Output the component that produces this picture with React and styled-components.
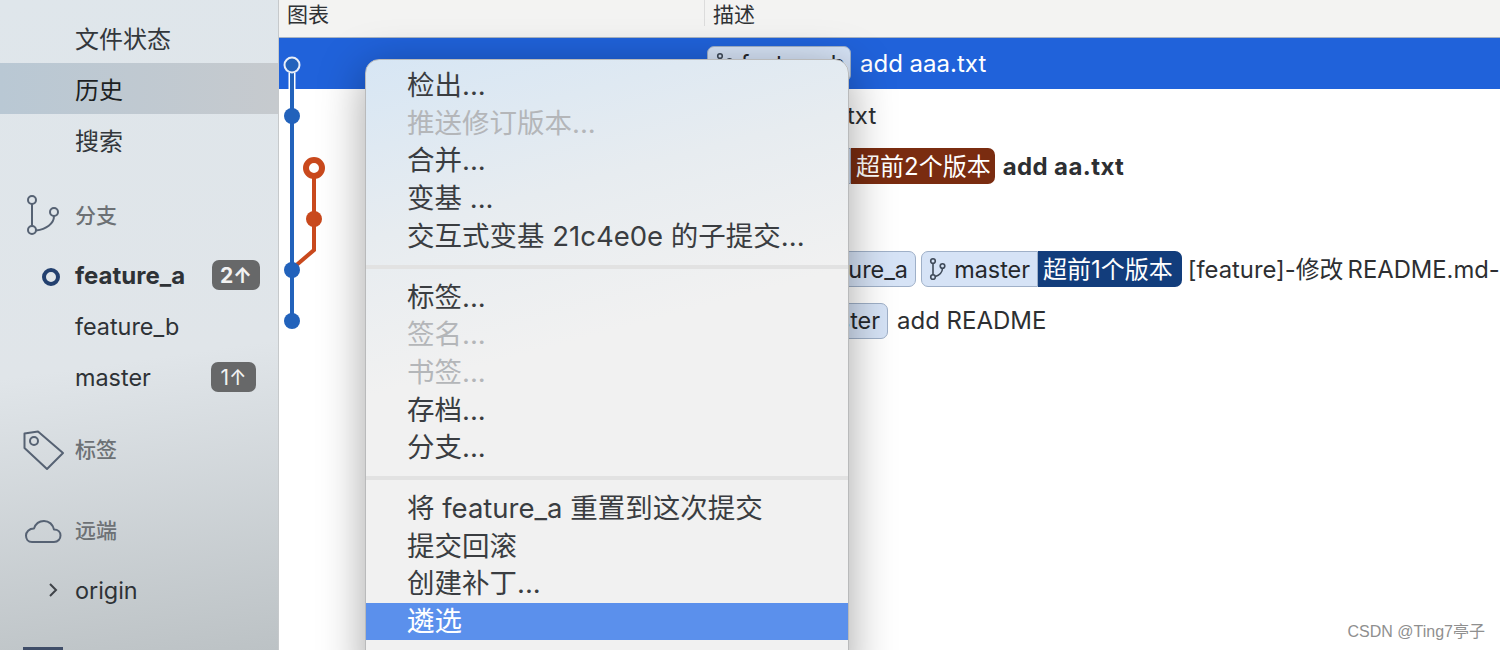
import styled, { createGlobalStyle } from 'styled-components'

const FONT = `"Inter", "Noto Sans CJK SC", sans-serif`

const GlobalStyle = createGlobalStyle`
    html, body {
        margin: 0;
        height: 650px;
        overflow: hidden;
        background: #fff;
        font-family: ${FONT};
    }
`

const Window = styled.div`
    display: flex;
    width: 1500px;
    height: 650px;
    overflow: hidden;
    position: relative;
`

/* sidebar */
const Sidebar = styled.aside`
    width: 279px;
    flex-shrink: 0;
    height: 650px;
    padding-top: 12px;
    box-sizing: border-box;
    overflow: hidden;
    border-right: 1px solid #c6c9cb;
    background: linear-gradient(172deg, #dfe6eb 0%, #e0e5e9 55%, #bcc2c5 100%);
`
const NavItem = styled.div`
    height: 51px;
    display: flex;
    align-items: center;
    padding-left: 75px;
    font-size: 24px;
    background: ${props => props.$active ? 'linear-gradient(90deg, #b9c8d4, #c6cace)' : 'transparent'};
    color: ${props => props.$active ? '#1c1f22' : '#33373b'};
`
const Section = styled.div`
    height: 50px;
    margin-top: ${props => props.$top}px;
    box-sizing: border-box;
    padding: 0 0 4px 75px;
    display: flex;
    align-items: center;
    position: relative;
    font-size: 21px;
    font-weight: 500;
    color: #6d7175;
`
const SectionIcon = styled.svg`
    position: absolute;
    left: 0;
    top: 0;
    width: 75px;
    height: 50px;
    fill: none;
    stroke: #566273;
    stroke-width: 2;
`
const BranchRow = styled.div`
    height: 51px;
    display: flex;
    align-items: center;
    padding-left: 75px;
    margin-top: ${props => props.$top || 0}px;
    position: relative;
    font-size: ${props => props.$bold ? 24 : 23.4}px;
    font-weight: ${props => props.$bold ? 700 : 400};
    color: #2e3236;
`
const CurrentDot = styled.span`
    position: absolute;
    left: 42px;
    top: 18px;
    width: 10px;
    height: 10px;
    border: 4px solid #23406f;
    border-radius: 50%;
`
const Badge = styled.span`
    position: absolute;
    left: ${props => props.$left}px;
    top: 10px;
    width: ${props => props.$width}px;
    height: 30px;
    border-radius: 7px;
    background: #676869;
    color: #f2f2f2;
    font-size: 21px;
    display: flex;
    align-items: center;
    justify-content: center;
`
const Chevron = styled.svg`
    position: absolute;
    left: 47px;
    top: 16px;
    width: 12px;
    height: 18px;
    fill: none;
    stroke: #3f4348;
    stroke-width: 2;
`
const BottomIcon = styled.div`
    width: 40px;
    height: 6px;
    margin: 31px 0 0 23px;
    background: #3f4d68;
`

/* commit list */
const Main = styled.main`
    flex: 1;
    position: relative;
    min-width: 0;
`
const Header = styled.div`
    height: 38px;
    box-sizing: border-box;
    display: flex;
    background: #f3f3f2;
    border-bottom: 1px solid #a9b4c2;
    font-size: 21px;
    color: #2f3235;
`
const HeaderCell = styled.div`
    width: ${props => props.$width || 'auto'};
    padding-left: 8px;
    box-sizing: border-box;
    height: 26px;
    display: flex;
    align-items: center;
    border-right: ${props => props.$divider ? '1px solid #dcdcdc' : 'none'};
`
const Row = styled.div`
    height: 51.4px;
    display: flex;
    align-items: center;
    box-sizing: border-box;
    padding-left: 428px;
    white-space: nowrap;
    font-size: 24px;
    color: #2d2f32;
    background: ${props => props.$selected ? '#2062da' : '#fff'};
`
const Tag = styled.span`
    height: 36px;
    width: ${props => props.$width}px;
    box-sizing: border-box;
    flex-shrink: 0;
    display: flex;
    align-items: center;
    justify-content: flex-end;
    gap: 8px;
    padding: 0 ${props => props.$right ?? 7}px 0 7px;
    margin-right: ${props => props.$gap ?? 8}px;
    border: 1px solid #9fb0c8;
    border-radius: ${props => props.$joined ? '7px 0 0 7px' : '7px'};
    background: #d6e3f6;
    color: #25282c;
    font-size: 23.4px;
    font-weight: 400;
`
const AheadTag = styled.span`
    height: 36px;
    box-sizing: border-box;
    padding: 0 ${props => props.$right}px 3px 5px;
    display: flex;
    align-items: center;
    margin-right: ${props => props.$gap}px;
    border-radius: 0 7px 7px 0;
    background: ${props => props.$color};
    color: #fff;
    font-weight: 400;
`
const Message = styled.span`
    font-weight: ${props => props.$bold ? 700 : 400};
    letter-spacing: ${props => props.$bold ? 0.4 : 0}px;
    color: ${props => props.$light ? '#fff' : 'inherit'};
`
const LongMessage = styled.span`
    font-size: 23.8px;
    padding-bottom: 3px;
`
const Graph = styled.svg`
    position: absolute;
    left: 0;
    top: 0;
    width: 60px;
    height: 340px;
    fill: none;
`
const BranchGlyph = styled.svg`
    width: 18px;
    height: 24px;
    flex-shrink: 0;
    fill: none;
    stroke: #3f4a59;
    stroke-width: 1.6;
`

/* context menu */
const Menu = styled.div`
    position: absolute;
    left: 86px;
    top: 59px;
    width: 484px;
    box-sizing: border-box;
    padding: 7px 0 40px;
    border: 1px solid #b9babb;
    border-radius: 14px 14px 0 0;
    background: linear-gradient(165deg, #d7e6f4 0%, #e7ecf0 24%, #f1f1f1 45%);
    box-shadow: 0 10px 46px rgba(0, 0, 0, 0.36);
`
const MenuItem = styled.div`
    height: 37.6px;
    box-sizing: border-box;
    padding: 0 0 5px 41px;
    display: flex;
    align-items: center;
    font-size: 27.5px;
    white-space: nowrap;
    color: ${props => props.$disabled ? '#b4b6b9' : props.$active ? '#fff' : '#3a3d41'};
    background: ${props => props.$active ? '#5b90ec' : 'transparent'};
`
const Separator = styled.div`
    height: 4px;
    margin: 10px 0 9.5px;
    background: #e2e2e2;
`
const Watermark = styled.div`
    position: absolute;
    right: 15px;
    bottom: 8px;
    font-size: 16px;
    font-family: "Liberation Sans", "Noto Sans CJK SC", sans-serif;
    color: #8f8f8f;
`

const MiniBranch = () => (
    <BranchGlyph viewBox="0 0 18 24">
        <circle cx="5" cy="4" r="2.300" />
        <circle cx="5" cy="20" r="2.300" />
        <circle cx="14.500" cy="9" r="2.300" />
        <path d="M5 6.300v11.400M14.500 11.300c0 3.700-3.200 7-7.200 8.300" />
    </BranchGlyph>
)

const menuGroups = [
    [['检出...'], ['推送修订版本...', 'disabled'], ['合并...'], ['变基 ...'], ['交互式变基 21c4e0e 的子提交...']],
    [['标签...'], ['签名...', 'disabled'], ['书签...', 'disabled'], ['存档...'], ['分支...']],
    [['将 feature_a 重置到这次提交'], ['提交回滚'], ['创建补丁...'], ['遴选', 'active']],
]

const App = () => {
    return (
        <Window>
            <GlobalStyle />
            <Sidebar>
                <NavItem>文件状态</NavItem>
                <NavItem $active>历史</NavItem>
                <NavItem>搜索</NavItem>

                <Section $top={26}>
                    <SectionIcon viewBox="0 0 75 50">
                        <circle cx="32" cy="9" r="4" />
                        <circle cx="32" cy="39" r="4" />
                        <circle cx="54" cy="21" r="4" />
                        <path d="M32 13v22M54 25c0 8-8 13-18 14.500" />
                    </SectionIcon>
                    分支
                </Section>
                <BranchRow $top={9} $bold>
                    <CurrentDot />
                    feature_a
                    <Badge $left={212} $width={48}>2↑</Badge>
                </BranchRow>
                <BranchRow>feature_b</BranchRow>
                <BranchRow>
                    master
                    <Badge $left={211} $width={45}>1↑</Badge>
                </BranchRow>

                <Section $top={22}>
                    <SectionIcon viewBox="0 0 75 50">
                        <path d="M24.500 8.500 38 6.500 63 28 47 44 24.500 23z" strokeLinejoin="round" />
                        <circle cx="34" cy="16" r="4" />
                    </SectionIcon>
                    标签
                </Section>
                <Section $top={31}>
                    <SectionIcon viewBox="0 0 75 50">
                        <path d="M32 36h22c4 0 6.500-3 6.500-6.500S58 23.500 54 23.500c-1-5-5-8.500-10-8.500-5 0-8.500 3-10 7.500-5 0-8 3.500-8 7s2 6.500 6 6.500z" strokeLinejoin="round" />
                    </SectionIcon>
                    远端
                </Section>
                <BranchRow $top={9}>
                    <Chevron viewBox="0 0 12 18">
                        <path d="M3 3l6 6-6 6" />
                    </Chevron>
                    origin
                </BranchRow>
                <BottomIcon />
            </Sidebar>

            <Main>
                <Header>
                    <HeaderCell $width="426px" $divider>图表</HeaderCell>
                    <HeaderCell>描述</HeaderCell>
                </Header>

                <Row $selected>
                    <Tag $width={144} $gap={9} $right={5}><MiniBranch />feature_b</Tag>
                    <Message $light>add aaa.txt</Message>
                </Row>
                <Row>
                    <Tag $width={62} $gap={8} />
                    <Message>add a.txt</Message>
                </Row>
                <Row>
                    <Tag $width={144} $gap={0} $joined $right={5}><MiniBranch />feature_b</Tag>
                    <AheadTag $color="#7a2c10" $right={4} $gap={8}>超前2个版本</AheadTag>
                    <Message $bold>add aa.txt</Message>
                </Row>
                <Row />
                <Row>
                    <Tag $width={209} $gap={5}><MiniBranch />feature_a</Tag>
                    <Tag $width={117} $gap={0} $joined><MiniBranch />master</Tag>
                    <AheadTag $color="#123d7c" $right={9} $gap={6}>超前1个版本</AheadTag>
                    <LongMessage>[feature]-修改&#8201;README.md-</LongMessage>
                </Row>
                <Row>
                    <Tag $width={181} $gap={9}><MiniBranch />master</Tag>
                    <Message>add README</Message>
                </Row>

                <Graph viewBox="0 0 60 340">
                    <path d="M13 73v17" stroke="#fff" strokeWidth="7" />
                    <path d="M13 73v248" stroke="#2262bb" strokeWidth="4" />
                    <path d="M35 168v82l-21 18" stroke="#c9491d" strokeWidth="4" />
                    <circle cx="13" cy="65" r="7.500" fill="#2262bb" stroke="#e8eef8" strokeWidth="2" />
                    <circle cx="13" cy="116" r="8" fill="#2262bb" />
                    <circle cx="13" cy="270" r="8" fill="#2262bb" />
                    <circle cx="13" cy="321" r="8" fill="#2262bb" />
                    <circle cx="35" cy="168" r="8" fill="#fff" stroke="#c9491d" strokeWidth="6" />
                    <circle cx="35" cy="219" r="8" fill="#c9491d" />
                </Graph>

                <Menu>
                    {menuGroups.map((group, i) => (
                        <div key={i}>
                            {i > 0 && <Separator />}
                            {group.map(([label, state]) => (
                                <MenuItem key={label} $disabled={state === 'disabled'} $active={state === 'active'}>
                                    {label}
                                </MenuItem>
                            ))}
                        </div>
                    ))}
                </Menu>
            </Main>
            <Watermark>CSDN @Ting7亭子</Watermark>
        </Window>
    )
}

export default App
